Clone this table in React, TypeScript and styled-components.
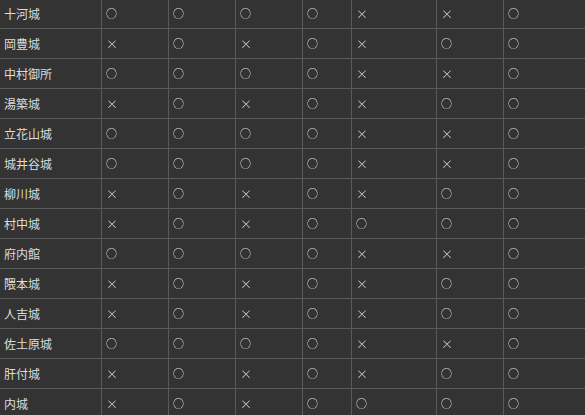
import React, { FC } from "react";
import styled, { createGlobalStyle } from "styled-components";

const GlobalStyle = createGlobalStyle`
  html, body {
    margin: 0;
    padding: 0;
    background: #333333;
    overflow: hidden;
  }
`;

const Sheet = styled.div`
  display: grid;
  grid-template-columns: 102px 67px 67px 67px 49px 85px 67px 1fr;
  grid-auto-rows: 30px;
  margin-top: -1px;
  width: 585px;
  background: #333333;
  font-family: "Noto Sans CJK JP", "Noto Sans", sans-serif;
  font-size: 12px;
  color: #dddddd;
`;

const Cell = styled.div<{ $last?: boolean }>`
  display: flex;
  align-items: center;
  box-sizing: border-box;
  padding-left: 4px;
  border-bottom: 1px solid #5a5a5a;
  border-right: ${(p) => (p.$last ? "none" : "1px solid #5a5a5a")};
  white-space: nowrap;
  overflow: hidden;
`;

const Mark = styled.span<{ $cross?: boolean }>`
  font-family: "Noto Sans CJK JP", sans-serif;
  font-size: ${(p) => (p.$cross ? "12px" : "11px")};
  font-weight: 300;
  line-height: 1;
  color: #e4e4e4;
  will-change: transform;
  -webkit-font-smoothing: antialiased;
`;

// o = ○, x = ×
const rows: [string, string][] = [
  ["十河城", "ooooxxo"],
  ["岡豊城", "xoxoxoo"],
  ["中村御所", "ooooxxo"],
  ["湯築城", "xoxoxoo"],
  ["立花山城", "ooooxxo"],
  ["城井谷城", "ooooxxo"],
  ["柳川城", "xoxoxoo"],
  ["村中城", "xoxoooo"],
  ["府内館", "ooooxxo"],
  ["隈本城", "xoxoxoo"],
  ["人吉城", "xoxoxoo"],
  ["佐土原城", "ooooxxo"],
  ["肝付城", "xoxoxoo"],
  ["内城", "xoxoooo"],
];

const App: FC = () => (
  <>
    <GlobalStyle />
    <Sheet>
      {rows.map(([name, marks]) => (
        <React.Fragment key={name}>
          <Cell>{name}</Cell>
          {marks.split("").map((m, i) => (
            <Cell key={i} $last={i === marks.length - 1}>
              <Mark $cross={m === "x"}>{m === "o" ? "○" : "×"}</Mark>
            </Cell>
          ))}
        </React.Fragment>
      ))}
    </Sheet>
  </>
);

export default App;
